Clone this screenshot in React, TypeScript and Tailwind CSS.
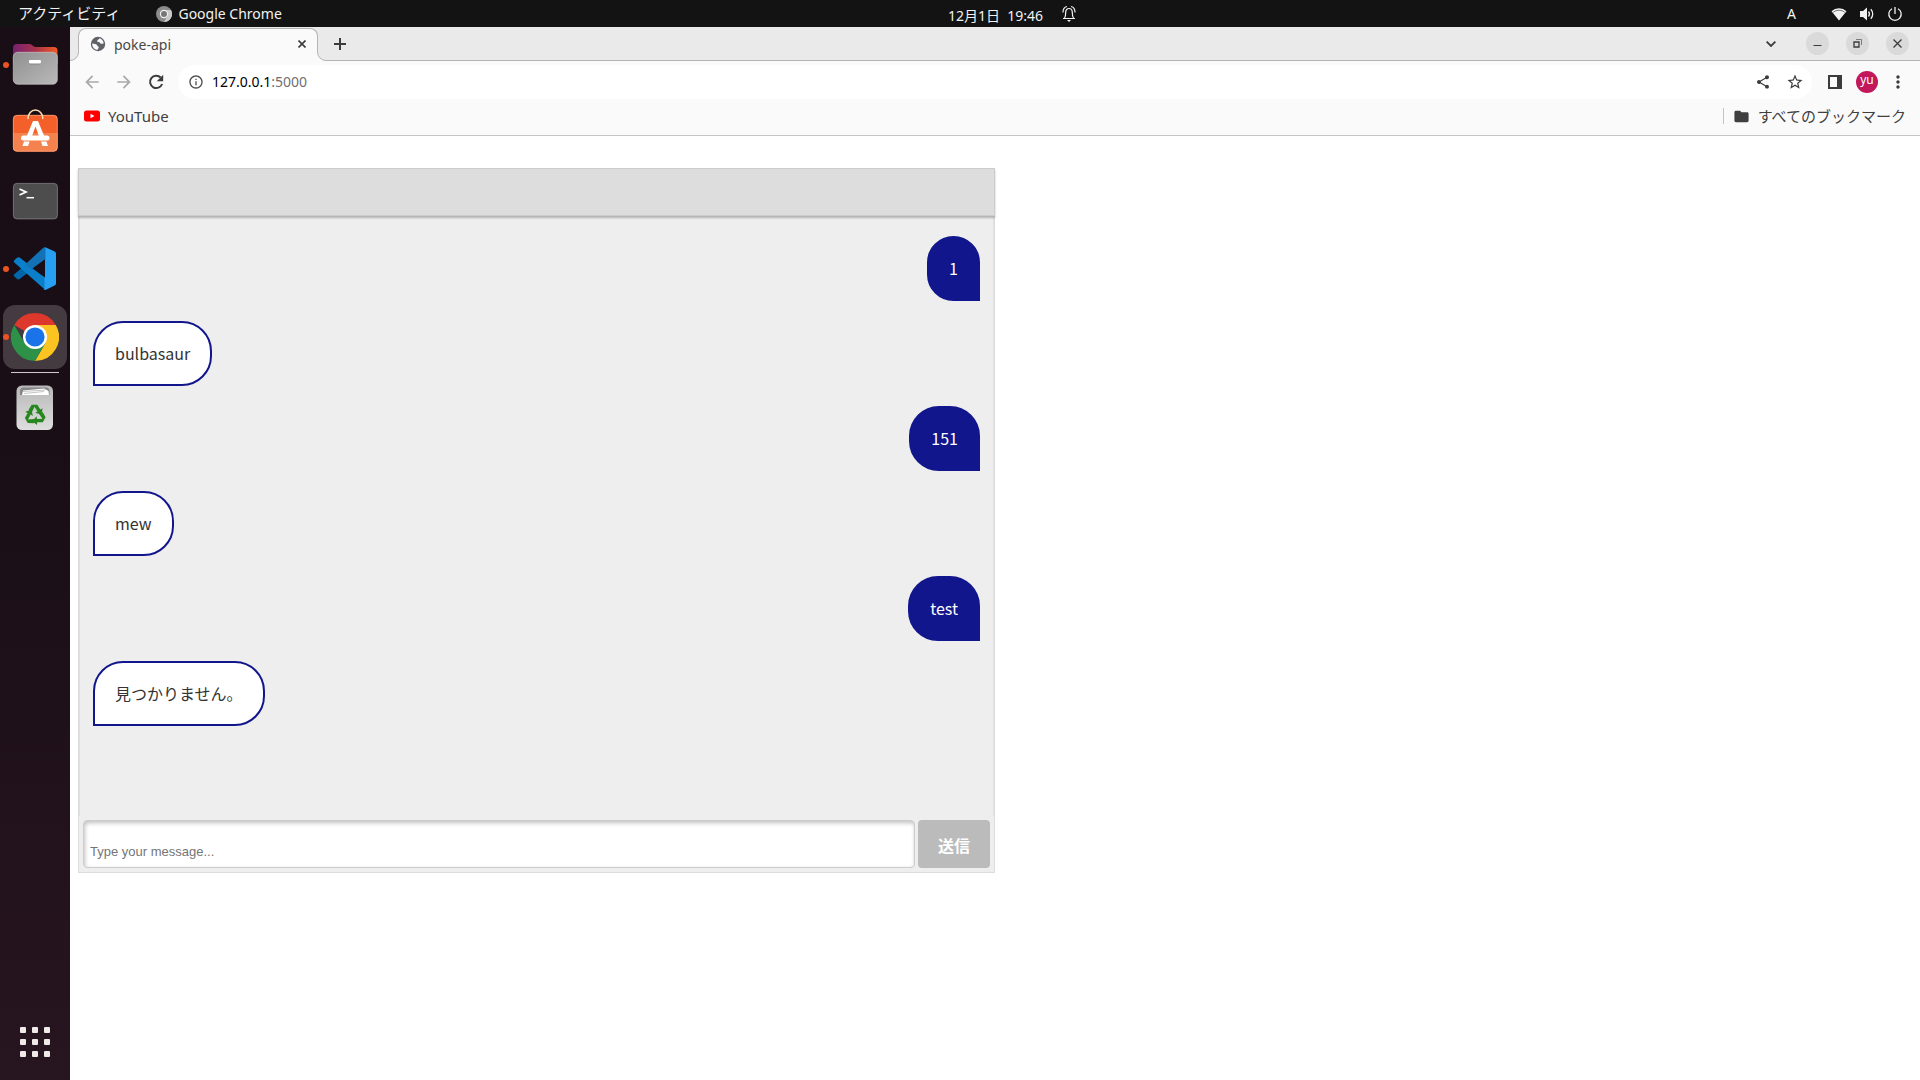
import React from "react";
import {
  MdArrowBack,
  MdArrowForward,
  MdInfoOutline,
  MdShare,
  MdStarOutline,
  MdMoreVert,
  MdFolder,
} from "react-icons/md";

function FilesIcon() {
  return (
    <svg viewBox="-1 1 48 48" className="size-12" aria-hidden="true">
      <defs>
        <linearGradient id="files-back" x1="0" y1="0" x2="1" y2="0">
          <stop offset="0" stopColor="#77216f" />
          <stop offset="0.5" stopColor="#a8324c" />
          <stop offset="1" stopColor="#f15a22" />
        </linearGradient>
        <linearGradient id="files-front" x1="0" y1="0" x2="1" y2="1">
          <stop offset="0" stopColor="#909090" />
          <stop offset="1" stopColor="#b9b9b9" />
        </linearGradient>
      </defs>
      <path d="M1 8a4 4 0 0 1 4-4h12.500a4 4 0 0 1 2.500 1l1.500 1.300a3 3 0 0 0 2 .7H42a3.500 3.500 0 0 1 3.500 3.500V24H1z" fill="url(#files-back)" />
      <rect x="1.300" y="12.300" width="44" height="31.900" rx="4.500" fill="url(#files-front)" stroke="#c6c6c6" strokeWidth="0.700" />
      <rect x="17" y="21" width="12" height="3.500" rx="1" fill="#6e6e6e" opacity="0.500" />
      <rect x="17" y="20" width="12" height="3.500" rx="1" fill="#fff" />
    </svg>
  );
}

function SoftwareIcon() {
  return (
    <svg viewBox="-1 1 48 48" className="size-12" aria-hidden="true">
      <rect x="1" y="7" width="44.500" height="36.500" rx="4" fill="#f4602a" />
      <path d="M1 25h44.500v14.500a4 4 0 0 1-4 4H5a4 4 0 0 1-4-4z" fill="#f4824f" />
      <rect x="1.300" y="7.300" width="44" height="35.900" rx="4" fill="none" stroke="#f9a57e" strokeWidth="0.700" />
      <path d="M16 10.500a7.400 8.500 0 0 1 14.800 0" fill="none" stroke="#fbdcae" strokeWidth="1.600" strokeLinecap="round" />
      <path d="M21 13h5l6.200 15h-5.300L23.500 18.500 20 28h-5.200z" fill="#fff" />
      <rect x="9" y="27.500" width="28.500" height="5" rx="2.500" fill="#fff" />
      <path d="M12 33.500h5.600l-1.600 4.500h-5.500zM29 33.500h5.400L36 38h-5.500z" fill="#fff" />
    </svg>
  );
}

function TerminalIcon() {
  return (
    <svg viewBox="-1 0 48 48" className="size-12" aria-hidden="true">
      <rect x="1.400" y="6.400" width="44" height="35.500" rx="3.500" fill="#4d4d4d" stroke="#808080" strokeWidth="0.800" />
      <path d="M7.500 12l6.500 3-6.500 3" fill="none" stroke="#fff" strokeWidth="1.800" />
      <path d="M14.500 20.700h7.500" stroke="#fff" strokeWidth="1.500" />
    </svg>
  );
}

function CodeIcon() {
  return (
    <svg viewBox="-1 0 48 48" className="size-12" aria-hidden="true">
      <path d="M2.300 29.200a1.500 1.500 0 0 0 0 2.200l2.800 2.600a2 2 0 0 0 2.500.1L33 14.500V3z" fill="#0065a9" />
      <path d="M2.300 17.500a1.500 1.500 0 0 1 0-2.200l2.800-2.600a2 2 0 0 1 2.500-.1L33 32v12.800z" fill="#0a7fca" />
      <path d="M32.800 44.800A2.600 2.600 0 0 1 32.500 44V3.600l.8-1.300 9.400 4.100A2.500 2.500 0 0 1 44 8.700v29.700a2.500 2.500 0 0 1-1.400 2.200l-8.700 4.200a2.600 2.600 0 0 1-2.900-.5z" fill="#26a0f2" />
      <path d="M31 3c.7-.7 1.700-.9 2.500-.5V14L19.500 24l-6.300-4.600z" fill="#1272b5" />
      <path d="M33 14.300V32.500L20.500 23.500z" fill="#1b0f17" />
    </svg>
  );
}

function ChromeIcon() {
  return (
    <svg viewBox="0 0 48 48" className="size-12" aria-hidden="true">
      <path d="M24 24 3.215 12a24 24 0 0 1 41.570 0z" fill="#dd382c" />
      <path d="M24 12h20.785A24 24 0 0 1 24 48L34.392 30z" fill="#fcc420" />
      <path d="M13.608 30 3.215 12A24 24 0 0 0 24 48L34.392 30z" fill="#2d9247" />
      <circle cx="24" cy="24" r="12" fill="#fff" />
      <circle cx="24" cy="24" r="9.600" fill="#1a73e8" />
    </svg>
  );
}

function TrashIcon() {
  return (
    <svg viewBox="0 0 48 48" className="size-12" aria-hidden="true">
      <defs>
        <linearGradient id="bin" x1="0" y1="0" x2="0" y2="1">
          <stop offset="0" stopColor="#b8b8b8" />
          <stop offset="1" stopColor="#dedede" />
        </linearGradient>
      </defs>
      <rect x="5.500" y="1.500" width="36.500" height="44.500" rx="5.500" fill="url(#bin)" />
      <path d="M9 11V7a3.500 3.500 0 0 1 3.500-3.500h22.500A3.500 3.500 0 0 1 38.500 7v4z" fill="#858585" />
      <path d="M11 11l1-4.500L33 4.500l4.500 2.500.5 4z" fill="#fff" />
      <path d="M12 7.500l22-1.500M13 9.500l20-2" stroke="#aaa" strokeWidth="0.700" />
      <g transform="translate(24 31) scale(1.200)" fill="#26871f">
        <g id="arrow">
          <path d="M-5.400-4.200-2.800-8.600h4.800L4.400-4.600l1.900-1-.8 5.300-5.300-1.600L2.100-3-.4-6.900-2.500-2.500z" />
        </g>
        <use href="#arrow" transform="rotate(120)" />
        <use href="#arrow" transform="rotate(240)" />
      </g>
    </svg>
  );
}

const dockItems = [
  { name: "ファイル", icon: <FilesIcon />, running: true, active: false },
  { name: "Ubuntu Software", icon: <SoftwareIcon />, running: false, active: false },
  { name: "端末", icon: <TerminalIcon />, running: false, active: false },
  { name: "Visual Studio Code", icon: <CodeIcon />, running: true, active: false },
  { name: "Google Chrome", icon: <ChromeIcon />, running: true, active: true },
];

function TopBar() {
  return (
    <header className="flex h-[27px] shrink-0 items-center bg-[#131313] text-[14px] text-[#f2f2f2]">
      <div className="flex flex-1 items-center pl-[18px]">
        <button type="button" className="text-[15px]">アクティビティ</button>
        <button type="button" className="ml-9 flex items-center gap-1.5">
          <svg viewBox="0 0 16 16" className="size-4" aria-hidden="true">
            <circle cx="8" cy="8" r="8" fill="#8b8b8b" />
            <path d="M8 4h7a8 8 0 0 1-7 12l3.500-6z" fill="#c9c9c9" />
            <circle cx="8" cy="8" r="4.200" fill="#f0f0f0" />
            <circle cx="8" cy="8" r="3" fill="#777" />
          </svg>
          Google Chrome
        </button>
      </div>
      <div className="flex items-center gap-[18px] pl-[104px]">
        <button type="button" className="pt-1 whitespace-pre">12月1日  19:46</button>
        <svg viewBox="0 0 16 18" className="h-[18px] w-4" fill="none" stroke="#f2f2f2" strokeWidth="1.200" aria-label="通知">
          <path d="M2 13.500h12M3.500 13c1-1.500 1.200-3 1.200-5.500C4.700 5 6 3.500 8 3.500S11.300 5 11.300 7.500c0 2.500.2 4 1.200 5.500M2 7.500C2 4.500 3.500 2 6 1.500M14 7.500c0-3-1.500-5.500-4-6" />
          <path d="M6 15h4l-2 2z" fill="#f2f2f2" stroke="none" />
        </svg>
      </div>
      <div className="flex flex-1 items-center justify-end pr-[17px]">
        <span className="mr-[35px]">A</span>
        <svg viewBox="0 0 16 14" className="mr-3 h-3.5 w-4" aria-label="Wi-Fi">
          <path d="M8 13.500.5 4.200a11 11 0 0 1 15 0z" fill="#f2f2f2" />
          <path d="M2.200 5.300a9 9 0 0 1 11.600 0" fill="none" stroke="#555" strokeWidth="0.800" />
        </svg>
        <svg viewBox="0 0 16 16" className="mr-3 size-4" fill="none" stroke="#f2f2f2" strokeWidth="1.300" aria-label="音量">
          <path d="M1 5h3l4-3.500v13L4 11H1z" fill="#f2f2f2" stroke="none" />
          <path d="M9.500 5.500a4 4 0 0 1 0 5M11.800 3.200a7 7 0 0 1 0 9.600" />
        </svg>
        <svg viewBox="0 0 16 16" className="size-4" fill="none" stroke="#f2f2f2" strokeWidth="1.300" aria-label="電源">
          <path d="M8 1v7M5 2.700a6.200 6.200 0 1 0 6 0" />
        </svg>
      </div>
    </header>
  );
}

function Dock() {
  return (
    <nav className="flex w-[70px] shrink-0 flex-col items-center bg-linear-to-b from-[#190e16] from-40% to-[#271520] py-1.5">
      <div className="flex w-full flex-col items-center gap-1">
        {dockItems.map((item) => (
          <div key={item.name} className="relative flex w-full justify-center">
            <button
              type="button"
              aria-label={item.name}
              className={item.active ? "flex size-16 items-center justify-center rounded-xl bg-[#443b40]" : "flex size-16 items-center justify-center rounded-xl"}
            >
              {item.icon}
            </button>
            {item.running && <span className="absolute top-[29px] left-[3px] size-1.5 rounded-full bg-[#e95420]" />}
          </div>
        ))}
      </div>
      <div className="my-[3px] h-px w-12 bg-[#cfcbcd]" />
      <button type="button" aria-label="ゴミ箱" className="flex size-16 items-center justify-center">
        <TrashIcon />
      </button>
      <button type="button" aria-label="アプリケーションを表示する" className="mt-auto grid size-16 grid-cols-[6px_6px_6px] place-content-center gap-1.5">
        {Array.from({ length: 9 }, (_, i) => (
          <span key={i} className="size-1.5 rounded-[1px] bg-[#efebe9]" />
        ))}
      </button>
    </nav>
  );
}

function TabStrip() {
  return (
    <div className="flex h-[34px] items-center border-b border-[#b4b4b4] bg-[#eaeaea] pr-[11px] text-[#3c3c3c]">
      <div className="relative mt-px -mb-px ml-2 flex h-[33px] w-60 items-center rounded-t-lg border border-b-0 border-[#b4b4b4] bg-[#fafafa] pr-2 pb-0.5 pl-[11px] text-[14px] text-[#484848]">
        <svg viewBox="0 0 9 9" className="absolute bottom-0 -left-[9px] size-[9px]" aria-hidden="true">
          <path d="M9 0v9H0V8.500A8.500 8.500 0 0 0 8.500 0z" fill="#fafafa" />
          <path d="M0 8.500A8.500 8.500 0 0 0 8.500 0" fill="none" stroke="#b4b4b4" />
        </svg>
        <svg viewBox="0 0 16 16" className="size-4" aria-hidden="true">
          <circle cx="8" cy="8" r="7.200" fill="#5f6368" />
          <path d="M2.200 7.500c2 .3 4.300.2 4.800 1.700.3 1.100 1.500.7 1.700 2 .1 1-.9 1.200-1 2.600C4.500 13.700 2 11.200 2.200 7.500z" fill="#fafafa" />
          <path d="M9.500 2.200c-.2 1.300-2 1-2.200 2.300-.2 1 .4 1.700 1.700 1.600.9 0 .9 1.200 1.800 1.600 1.200.5 1.600-.6 2.900-.2-.1-2.600-1.800-4.600-4.200-5.300z" fill="#fafafa" />
        </svg>
        <span className="ml-2">poke-api</span>
        <button type="button" aria-label="タブを閉じる" className="ml-auto flex size-3.5 items-center justify-center">
          <svg viewBox="0 0 8 8" className="size-2" stroke="#3c3c3c" strokeWidth="1.600" aria-hidden="true"><path d="M.5.5l7 7M7.500.5l-7 7" /></svg>
        </button>
        <svg viewBox="0 0 9 9" className="absolute -right-[9px] bottom-0 size-[9px]" aria-hidden="true">
          <path d="M0 0v9h9V8.500A8.500 8.500 0 0 1 .5 0z" fill="#fafafa" />
          <path d="M9 8.500A8.500 8.500 0 0 1 .5 0" fill="none" stroke="#b4b4b4" />
        </svg>
      </div>
      <button type="button" aria-label="新しいタブ" className="ml-4">
        <svg viewBox="0 0 12 12" className="size-3" stroke="#3c3c3c" strokeWidth="2" aria-hidden="true"><path d="M6 0v12M0 6h12" /></svg>
      </button>
      <button type="button" aria-label="タブを検索" className="mr-[30px] ml-auto">
        <svg viewBox="0 0 10 6" className="h-1.5 w-2.5" fill="none" stroke="#3c3c3c" strokeWidth="1.800" aria-hidden="true"><path d="M.6.6 5 5 9.400.6" /></svg>
      </button>
      <div className="flex gap-[17px]">
        <button type="button" aria-label="最小化" className="flex size-[23px] items-center justify-center rounded-full bg-[#dadada]">
          <svg viewBox="0 0 9 9" className="size-[9px]" stroke="#3c3c3c" aria-hidden="true"><path d="M0.500 6.500h8" /></svg>
        </button>
        <button type="button" aria-label="元に戻す" className="flex size-[23px] items-center justify-center rounded-full bg-[#dadada]">
          <svg viewBox="0 0 9 9" className="size-[9px]" fill="none" stroke="#3c3c3c" aria-hidden="true">
            <path d="M1 3h5v5H1z" strokeWidth="1.300" />
            <path d="M3 .5h5.500V6" strokeOpacity="0.600" />
          </svg>
        </button>
        <button type="button" aria-label="閉じる" className="flex size-[23px] items-center justify-center rounded-full bg-[#dadada]">
          <svg viewBox="0 0 9 9" className="size-[9px]" stroke="#3c3c3c" strokeWidth="1.300" aria-hidden="true"><path d="M.5.5l8 8M8.500.5l-8 8" /></svg>
        </button>
      </div>
    </div>
  );
}

function Toolbar() {
  return (
    <div className="flex h-[42px] items-center bg-[#fafafa] pr-4 pl-3 text-[#3c3c3c]">
      <div className="flex items-center gap-3">
        <button type="button" aria-label="戻る" className="text-[#a9a9a9]"><MdArrowBack className="size-5" /></button>
        <button type="button" aria-label="進む" className="text-[#a9a9a9]"><MdArrowForward className="size-5" /></button>
        <button type="button" aria-label="再読み込み">
          <svg viewBox="0 0 20 20" className="size-5" aria-hidden="true">
            <path d="M14.700 5.500A6.200 6.200 0 1 0 16.100 12" fill="none" stroke="#3c3c3c" strokeWidth="2" />
            <path d="M17.200 2.800v6.400h-6.400z" fill="#3c3c3c" />
          </svg>
        </button>
      </div>
      <div className="ml-3 flex h-[34px] flex-1 items-center rounded-full bg-white pr-2 pl-2.5">
        <MdInfoOutline className="size-4 shrink-0 text-[#4e4e4e]" />
        <div className="ml-2 pb-0.5 text-[14px] text-[#6f6f6f]">
          <span className="text-black">127.0.0.1</span>:5000
        </div>
        <div className="ml-auto flex items-center gap-[15px]">
          <button type="button" aria-label="共有"><MdShare className="size-4" /></button>
          <button type="button" aria-label="ブックマークに追加"><MdStarOutline className="size-[18px]" /></button>
        </div>
      </div>
      <div className="ml-4 flex items-center gap-[14px]">
        <button type="button" aria-label="サイドパネル">
          <svg viewBox="0 0 14 14" className="size-3.5" aria-hidden="true">
            <path d="M0 0h14v14H0zM2 2v10h7V2z" fill="#3c3c3c" fillRule="evenodd" />
          </svg>
        </button>
        <button type="button" className="flex size-[22px] items-center justify-center rounded-full bg-[#c2185b] pb-1 text-[12px] leading-none text-white">yu</button>
        <button type="button" aria-label="メニュー" className="-mx-1"><MdMoreVert className="size-5" /></button>
      </div>
    </div>
  );
}

function Bookmarks() {
  return (
    <div className="flex h-[33px] items-center justify-between border-b border-[#c6c6c6] bg-[#fafafa] px-3.5 pb-1.5 text-[15px] text-[#3f3f3f]">
      <a href="#youtube" className="flex items-center gap-2">
        <svg viewBox="0 0 16 12" className="h-3 w-4" aria-hidden="true">
          <rect y="0.500" width="16" height="11" rx="2.500" fill="#f00" />
          <path d="M6.500 3.700v4.600l4-2.300z" fill="#fff" />
        </svg>
        YouTube
      </a>
      <button type="button" className="flex items-center">
        <span className="mr-[9px] h-4 w-px bg-[#c4c4c4]" />
        <MdFolder className="mr-2 size-[17px]" />
        すべてのブックマーク
      </button>
    </div>
  );
}

const messages = [
  { from: "user", text: "1" },
  { from: "bot", text: "bulbasaur" },
  { from: "user", text: "151" },
  { from: "bot", text: "mew" },
  { from: "user", text: "test" },
  { from: "bot", text: "見つかりません。" },
];

function Chat() {
  return (
    <section className="flex w-1/2 flex-col border border-[#ddd] bg-[#eee] font-['Noto_Sans_CJK_JP',sans-serif]">
      <div className="relative -mx-px -mt-px h-12 border border-[#ccc] bg-[#ddd] shadow-[0_2px_2px_rgba(0,0,0,0.25)]" />
      <ul className="flex h-[600px] flex-col gap-5 overflow-auto border-x border-[#e0e0e0] px-[13px] py-5 text-[16px]">
        {messages.map((m, i) => (
          <li
            key={i}
            className={
              m.from === "user"
                ? "flex h-[65px] shrink-0 items-center self-end rounded-[30px] rounded-br-none border-2 border-[#12168c] bg-[#12168c] px-5 pb-0.5 text-white"
                : "flex h-[65px] shrink-0 items-center self-start rounded-[30px] rounded-bl-none border-2 border-[#12168c] bg-white px-5 pb-0.5 text-[#333]"
            }
          >
            {m.text}
          </li>
        ))}
      </ul>
      <form className="flex gap-[3px] p-1" onSubmit={(e) => e.preventDefault()}>
        <input
          type="text"
          aria-label="メッセージ"
          placeholder="Type your message..."
          className="h-12 min-w-0 flex-1 rounded-[4px] border border-[#ccc] bg-white px-1.5 pt-3.5 font-['Liberation_Sans',sans-serif] text-[13px] text-[#333] shadow-[inset_1px_2px_4px_rgba(0,0,0,0.25)] placeholder:text-[#757575]"
        />
        <button type="submit" className="h-12 w-[72px] rounded-[4px] bg-[#bbb] pt-0.5 text-[16px] font-bold text-white">送信</button>
      </form>
    </section>
  );
}

export default function App() {
  return (
    <div lang="ja" className="flex h-screen flex-col overflow-hidden bg-white font-['Noto_Sans','Noto_Sans_CJK_JP',sans-serif]">
      <TopBar />
      <div className="flex min-h-0 flex-1">
        <Dock />
        <div className="flex min-w-0 flex-1 flex-col">
          <TabStrip />
          <Toolbar />
          <Bookmarks />
          <main className="flex-1 overflow-auto px-2 pt-8">
            <Chat />
          </main>
        </div>
      </div>
    </div>
  );
}
